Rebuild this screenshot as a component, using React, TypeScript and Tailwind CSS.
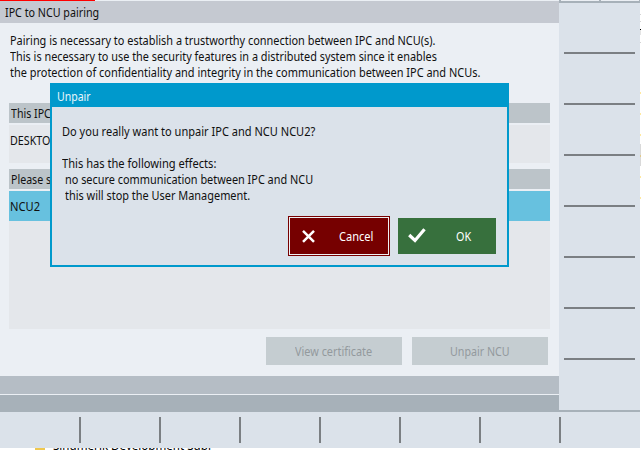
import { useLayoutEffect, useRef, useState } from "react";

type LabelProps = { text: string; width: number; className?: string };

// A condensed label: the face is narrowed until the line fills the given width.
function Label({ text, width, className = "" }: LabelProps) {
  const ref = useRef<HTMLSpanElement>(null);
  const [scale, setScale] = useState(0.82);
  useLayoutEffect(() => {
    if (ref.current) setScale(width / ref.current.offsetWidth);
  }, [width, text]);
  return (
    <span className={`block h-4 whitespace-pre leading-[14px] ${className}`} style={{ width }}>
      <span ref={ref} className="inline-block origin-left" style={{ transform: `scaleX(${scale})` }}>
        {text}
      </span>
    </span>
  );
}

function TopStrip() {
  return (
    <div className="flex h-[3px] shrink-0 justify-between border-b-2 border-[#a7b1b9] bg-[#ebeff4]">
      <i className="w-0.5 bg-[#a7b1b9]" />
      <i className="w-0.5 bg-[#a7b1b9]" />
      <i className="w-px bg-[#a7b1b9]" />
    </div>
  );
}

function SideKeys() {
  return (
    <aside className="flex w-[81px] shrink-0 flex-col border-b-2 border-[#a7b1b9] bg-[#dbe2ea]">
      <TopStrip />
      <div className="ml-[5px] mt-[49px] flex w-[71px] flex-col gap-[49px]">
        {[1, 2, 3, 4, 5, 6, 7].map((k) => (
          <i key={k} className="h-0.5 bg-[#7b7f83]" />
        ))}
      </div>
    </aside>
  );
}

function WindowEdge() {
  return (
    <div className="flex w-px shrink-0 flex-col bg-white">
      <i className="mt-3.5 h-px bg-[#d4d4d4]" />
      <i className="mt-1.5 h-px bg-[#d4d4d4]" />
      <i className="mt-[7px] h-px bg-black" />
      <i className="h-[5px] bg-[#e4e4e4]" />
      <i className="mt-[7px] h-px bg-[#d4d4d4]" />
      <i className="mt-[49px] h-0.5 bg-[#ffe9a0]" />
      <i className="mt-[19px] h-0.5 bg-[#ffe9a0]" />
      <i className="mt-[19px] h-0.5 bg-[#ffe9a0]" />
      <i className="mt-2 h-[11px] bg-[#d9d9d9]" />
      <i className="h-0.5 bg-[#e0c98c]" />
      <i className="h-[9px] bg-[#d9d9d9]" />
      <i className="mt-2.5 h-0.5 bg-[#ffe9a0]" />
      <i className="mt-[19px] h-0.5 bg-[#ffe9a0]" />
    </div>
  );
}

function UnpairDialog() {
  return (
    <div
      role="dialog"
      className="absolute left-[50px] top-[83px] flex h-[184px] w-[459px] flex-col border-2 border-[#0099cc] bg-[#dbe2ea]"
    >
      <div className="h-[22px] shrink-0 bg-[#0099cc] pl-[5px] pt-[4px] text-[#e9f6fb]">
        <Label text="Unpair" width={34} />
      </div>
      <div className="pl-[10px] pt-[17px]">
        <Label text="Do you really want to unpair IPC and NCU NCU2?" width={253} />
        <div className="h-4" />
        <Label text="This has the following effects:" width={154} />
        <Label text="no secure communication between IPC and NCU" width={248} className="ml-[3px]" />
        <Label text="this will stop the User Management." width={185} className="ml-[3px]" />
      </div>
      <div className="ml-[236px] mt-[12px] flex items-center gap-2">
        <button className="h-10 w-[102px] border border-[#780000] bg-[#eef0f3] p-px">
          <span className="flex h-full items-center bg-[#760000] text-white">
            <svg width="14" height="14" viewBox="0 0 14 14" className="ml-[11px]">
              <path d="M2 1.8 13 12.8M13 1.8 2 12.8" stroke="#fff" strokeWidth="2.5" fill="none" />
            </svg>
            <Label text="Cancel" width={34} className="ml-6 mt-0.5" />
          </span>
        </button>
        <button className="flex h-9 w-[98px] items-center bg-[#37703d] text-white">
          <svg width="18" height="16" viewBox="0 0 18 16" className="ml-[10px]">
            <path d="M1.2 7 7 12.5 16.5 1.3" stroke="#fff" strokeWidth="3.2" fill="none" />
          </svg>
          <Label text="OK" width={15} className="ml-[30px] mt-0.5" />
        </button>
      </div>
    </div>
  );
}

function PairingPage() {
  return (
    <main className="relative flex w-[559px] shrink-0 flex-col bg-[#ebeff4]">
      <div className="h-px w-[95px] bg-[#ff0000]" />
      <div className="h-[22px] shrink-0 bg-[#c5c9d1] pl-[5px] pt-1">
        <Label text="IPC to NCU pairing" width={94} />
      </div>
      <div className="h-20 shrink-0 pl-[10px] pt-[10px]">
        <Label text="Pairing is necessary to establish a trustworthy connection between IPC and NCU(s)." width={425} />
        <Label text="This is necessary to use the security features in a distributed system since it enables" width={427} />
        <Label text="the protection of confidentiality and integrity in the communication between IPC and NCUs." width={470} />
      </div>
      <div className="ml-[9px] flex w-[541px] flex-col">
        <div className="h-5 bg-[#bcc4c9] pl-0.5 pt-[3px]">
          <Label text="This IPC" width={40} />
        </div>
        <div className="mt-0.5 h-[38px] bg-[#e4e7eb] pl-px pt-2">
          <Label text="DESKTOP" width={47} />
        </div>
        <div className="mt-1.5 h-5 bg-[#bcc4c9] pl-0.5 pt-[3px]">
          <Label text="Please s" width={40} />
        </div>
        <div className="mt-0.5 h-[138px] bg-[#e4e7eb]">
          <div className="h-[30px] bg-[#67c1df] pl-px pt-2">
            <Label text="NCU2" width={30} />
          </div>
        </div>
      </div>
      <div className="ml-[266px] mt-2 flex gap-2.5 text-[#93999d]">
        <button className="flex h-7 w-[136px] items-center bg-[#c5cdd1] pl-[29px]">
          <Label text="View certificate" width={77} className="mt-0.5" />
        </button>
        <button className="flex h-7 w-[136px] items-center bg-[#c5cdd1] pl-[38px]">
          <Label text="Unpair NCU" width={60} className="mt-0.5" />
        </button>
      </div>
      <div className="mt-[11px] h-[18px] bg-[#b5bdc5]" />
      <div className="mt-px h-[17px] bg-[#a7b1b9]" />
      <UnpairDialog />
    </main>
  );
}

export default function App() {
  return (
    <div className="flex h-[450px] w-[641px] flex-col overflow-hidden bg-white font-['Noto_Sans','Open_Sans',sans-serif] text-[13px] text-[#101010]">
      <div className="flex h-[412px] shrink-0">
        <PairingPage />
        <SideKeys />
        <WindowEdge />
      </div>
      <div className="flex h-9 w-[640px] shrink-0 gap-[78px] bg-[#dbe2ea] py-[5px] pl-[79px]">
        {[1, 2, 3, 4, 5, 6, 7].map((k) => (
          <i key={k} className="w-0.5 shrink-0 bg-[#7b7f83]" />
        ))}
      </div>
      <div className="flex h-0.5 items-end overflow-hidden pl-[35px] text-black">
        <i className="h-0.5 w-2.5 bg-[#efc850]" />
        <Label text="Sinumerik Development Subl" width={158} className="-mb-1 ml-2 shrink-0" />
      </div>
    </div>
  );
}
